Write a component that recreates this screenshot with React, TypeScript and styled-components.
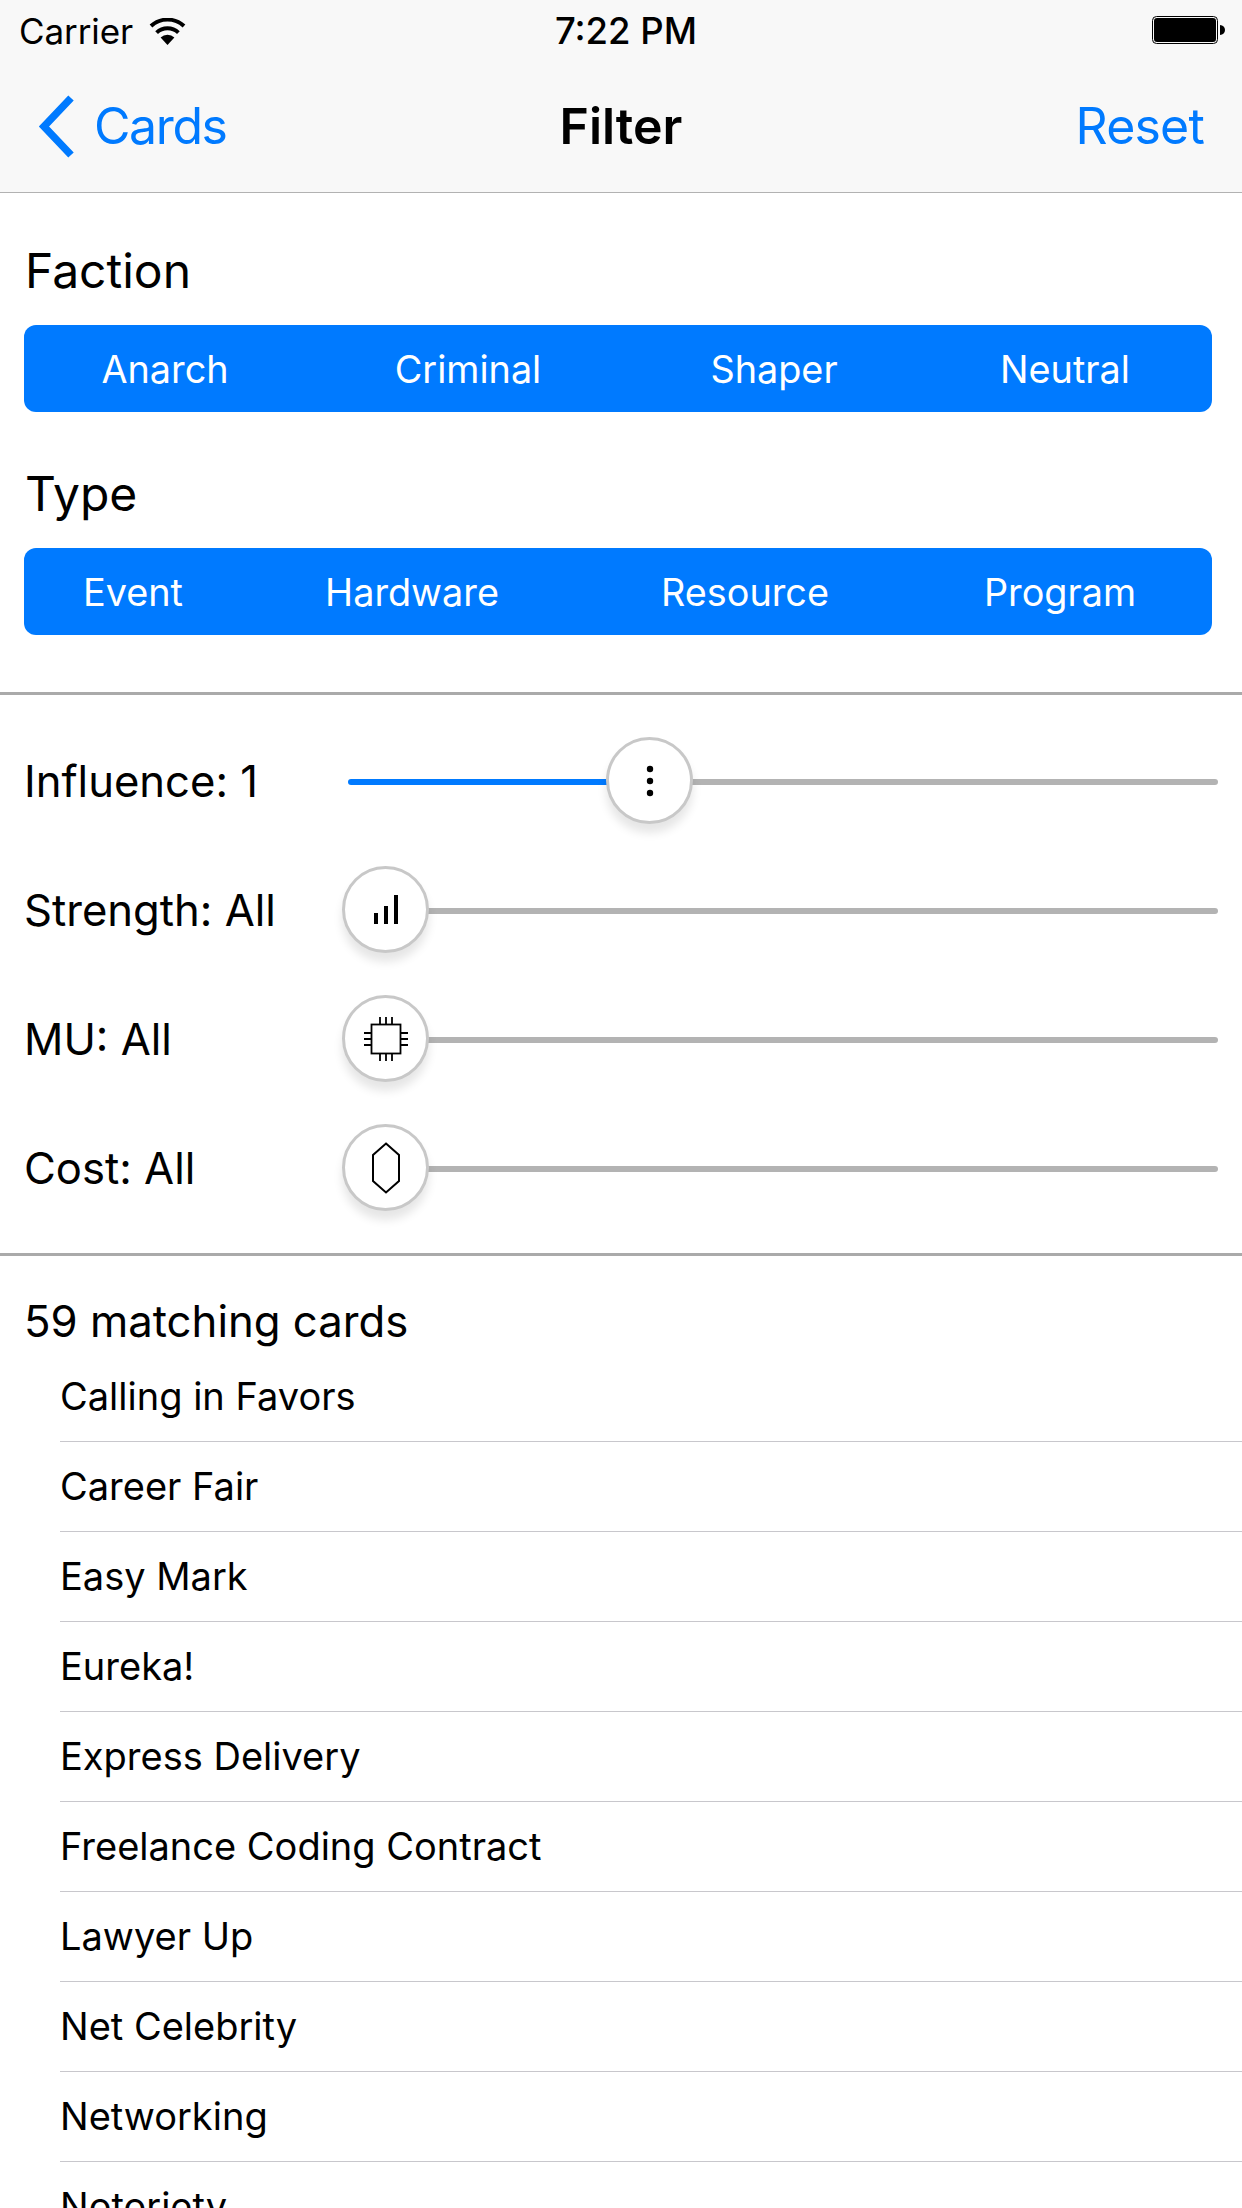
import styled, { createGlobalStyle } from "styled-components";

const GlobalStyle = createGlobalStyle`
    html, body {
        margin: 0;
        padding: 0;
        background: #fff;
    }
    body {
        font-family: Inter, "Liberation Sans", sans-serif;
        color: #000;
    }
`;

const Screen = styled.div`
    width: 1242px;
    height: 2208px;
    overflow: hidden;
    background: #fff;
`;

const Header = styled.header`
    background: #f8f8f8;
    border-bottom: 1px solid #b2b2b2;
`;

const StatusBar = styled.div`
    height: 60px;
    box-sizing: border-box;
    display: grid;
    grid-template-columns: 1fr auto 1fr;
    align-items: center;
    padding: 2px 17px 0 19px;
`;

const StatusLeft = styled.div`
    display: flex;
    align-items: center;
    gap: 16px;
    font-size: 35px;
    letter-spacing: -0.1px;
`;

const Time = styled.div`
    padding-left: 8px;
    font-size: 36.5px;
    font-weight: 500;
`;

const StatusRight = styled.div`
    display: flex;
    justify-content: flex-end;
    margin-top: -2px;
`;

const NavBar = styled.nav`
    height: 132px;
    display: grid;
    grid-template-columns: 1fr auto 1fr;
    align-items: center;
    padding: 0 38px 0 38px;
    box-sizing: border-box;
`;

const BackLink = styled.div`
    display: flex;
    align-items: center;
    gap: 19px;
    color: #007aff;
    font-size: 50px;
    letter-spacing: -1.4px;
`;

const Title = styled.div`
    font-size: 50px;
    font-weight: 600;
`;

const ResetLink = styled.div`
    color: #007aff;
    font-size: 50px;
    letter-spacing: -0.8px;
    text-align: right;
`;

const FilterSection = styled.section`
    padding: 53px 30px 57px 24px;
    display: flex;
    flex-direction: column;
    gap: 57px;
`;

const FilterGroup = styled.div`
    display: flex;
    flex-direction: column;
    gap: 29px;
`;

const GroupTitle = styled.div`
    font-size: 48px;
    line-height: 50px;
    padding-left: 1px;
`;

const SegmentBar = styled.div<{ $columns: string }>`
    height: 87px;
    display: grid;
    grid-template-columns: ${(p) => p.$columns};
    align-items: center;
    background: #007aff;
    border-radius: 12px;
`;

const Segment = styled.div`
    color: #fff;
    font-size: 37.8px;
    text-align: center;
`;

const Divider = styled.div`
    height: 3px;
    background: #aaa;
`;

const SliderSection = styled.section`
    padding: 21px 24px 21px 24px;
`;

const SliderRow = styled.div`
    height: 129px;
    display: flex;
    align-items: center;
`;

const SliderLabel = styled.div`
    width: 324px;
    flex-shrink: 0;
    padding-top: 2px;
    font-size: 43.6px;
`;

const Track = styled.div<{ $filled: number }>`
    position: relative;
    flex: 1;
    height: 6px;
    margin-top: 3px;
    border-radius: 3px;
    background: linear-gradient(
        to right,
        #007aff ${(p) => p.$filled}px,
        #b3b3b3 ${(p) => p.$filled}px
    );
`;

const Thumb = styled.div<{ $left: number }>`
    position: absolute;
    left: ${(p) => p.$left}px;
    top: -42px;
    width: 87px;
    height: 87px;
    box-sizing: border-box;
    display: flex;
    align-items: center;
    justify-content: center;
    background: #fff;
    border: 3px solid #c8c8c8;
    border-radius: 50%;
    box-shadow: 0 9px 10px rgba(0, 0, 0, 0.1);
`;

const ResultsTitle = styled.div`
    padding: 41px 0 5px 24px;
    font-size: 43.7px;
    line-height: 50px;
`;

const CardList = styled.div`
    padding-left: 60px;
`;

const CardRow = styled.div`
    height: 90px;
    box-sizing: border-box;
    display: flex;
    align-items: center;
    padding-bottom: 2px;
    font-size: 38px;
    border-bottom: 1px solid #c8c7cc;
`;

const WifiIcon = () => (
    <svg width="37" height="27" viewBox="0 0 37 27">
        <path d="M18.5 27 L11.6 19.4 A10 10 0 0 1 25.4 19.4 Z" fill="#000" />
        <path d="M7.6 14.6 A16 16 0 0 1 29.4 14.6" fill="none" stroke="#000" strokeWidth="4" />
        <path d="M2 8 A24.5 24.5 0 0 1 35 8" fill="none" stroke="#000" strokeWidth="4" />
    </svg>
);

const BatteryIcon = () => (
    <svg width="73" height="28" viewBox="0 0 73 28">
        <rect x="0.5" y="0.5" width="65" height="27" rx="4" fill="none" stroke="#000" />
        <rect x="2" y="2" width="62" height="24" rx="3" fill="#000" />
        <path d="M68 9 C71 9.5 73 11 73 14 C73 17 71 18.5 68 19 Z" fill="#000" />
    </svg>
);

const ChevronIcon = () => (
    <svg width="37" height="63" viewBox="0 0 37 63">
        <path d="M33 3 L6 31.5 L33 60" fill="none" stroke="#007aff" strokeWidth="7.5" />
    </svg>
);

const DotsIcon = () => (
    <svg width="8" height="32" viewBox="0 0 8 32">
        <circle cx="4" cy="4" r="3.2" fill="#000" />
        <circle cx="4" cy="16" r="3.2" fill="#000" />
        <circle cx="4" cy="28" r="3.2" fill="#000" />
    </svg>
);

const BarsIcon = () => (
    <svg width="24" height="29" viewBox="0 0 24 29">
        <rect x="0" y="18" width="4" height="11" fill="#000" />
        <rect x="10" y="11" width="4" height="18" fill="#000" />
        <rect x="20" y="0" width="4" height="29" fill="#000" />
    </svg>
);

const ChipIcon = () => (
    <svg width="44" height="44" viewBox="0 0 44 44" fill="none" stroke="#000" strokeWidth="1.8">
        <rect x="7.5" y="7.5" width="29" height="29" />
        <path d="M16 0 V7 M22 0 V7 M28 0 V7 M16 37 V44 M22 37 V44 M28 37 V44" />
        <path d="M0 16 H7 M0 22 H7 M0 28 H7 M37 16 H44 M37 22 H44 M37 28 H44" />
    </svg>
);

const CreditIcon = () => (
    <svg width="28" height="52" viewBox="0 0 28 52">
        <path d="M14 1.5 L27 13 V39 L14 50.5 L1 39 V13 Z" fill="none" stroke="#000" strokeWidth="2" />
    </svg>
);

const factions = ["Anarch", "Criminal", "Shaper", "Neutral"];
const types = ["Event", "Hardware", "Resource", "Program"];

const sliders = [
    { label: "Influence: 1", filled: 280, left: 258, icon: <DotsIcon /> },
    { label: "Strength: All", filled: 0, left: -6, icon: <BarsIcon /> },
    { label: "MU: All", filled: 0, left: -6, icon: <ChipIcon /> },
    { label: "Cost: All", filled: 0, left: -6, icon: <CreditIcon /> },
];

const cards = [
    "Calling in Favors",
    "Career Fair",
    "Easy Mark",
    "Eureka!",
    "Express Delivery",
    "Freelance Coding Contract",
    "Lawyer Up",
    "Net Celebrity",
    "Networking",
    "Notoriety",
];

export default function App() {
    return (
        <Screen>
            <GlobalStyle />
            <Header>
                <StatusBar>
                    <StatusLeft>
                        Carrier
                        <WifiIcon />
                    </StatusLeft>
                    <Time>7:22 PM</Time>
                    <StatusRight>
                        <BatteryIcon />
                    </StatusRight>
                </StatusBar>
                <NavBar>
                    <BackLink>
                        <ChevronIcon />
                        Cards
                    </BackLink>
                    <Title>Filter</Title>
                    <ResetLink>Reset</ResetLink>
                </NavBar>
            </Header>

            <FilterSection>
                <FilterGroup>
                    <GroupTitle>Faction</GroupTitle>
                    <SegmentBar $columns="282fr 324fr 288fr 294fr">
                        {factions.map((f) => (
                            <Segment key={f}>{f}</Segment>
                        ))}
                    </SegmentBar>
                </FilterGroup>
                <FilterGroup>
                    <GroupTitle>Type</GroupTitle>
                    <SegmentBar $columns="218fr 340fr 326fr 304fr">
                        {types.map((t) => (
                            <Segment key={t}>{t}</Segment>
                        ))}
                    </SegmentBar>
                </FilterGroup>
            </FilterSection>
            <Divider />

            <SliderSection>
                {sliders.map((s) => (
                    <SliderRow key={s.label}>
                        <SliderLabel>{s.label}</SliderLabel>
                        <Track $filled={s.filled}>
                            <Thumb $left={s.left}>{s.icon}</Thumb>
                        </Track>
                    </SliderRow>
                ))}
            </SliderSection>
            <Divider />

            <ResultsTitle>59 matching cards</ResultsTitle>
            <CardList>
                {cards.map((c) => (
                    <CardRow key={c}>{c}</CardRow>
                ))}
            </CardList>
        </Screen>
    );
}
